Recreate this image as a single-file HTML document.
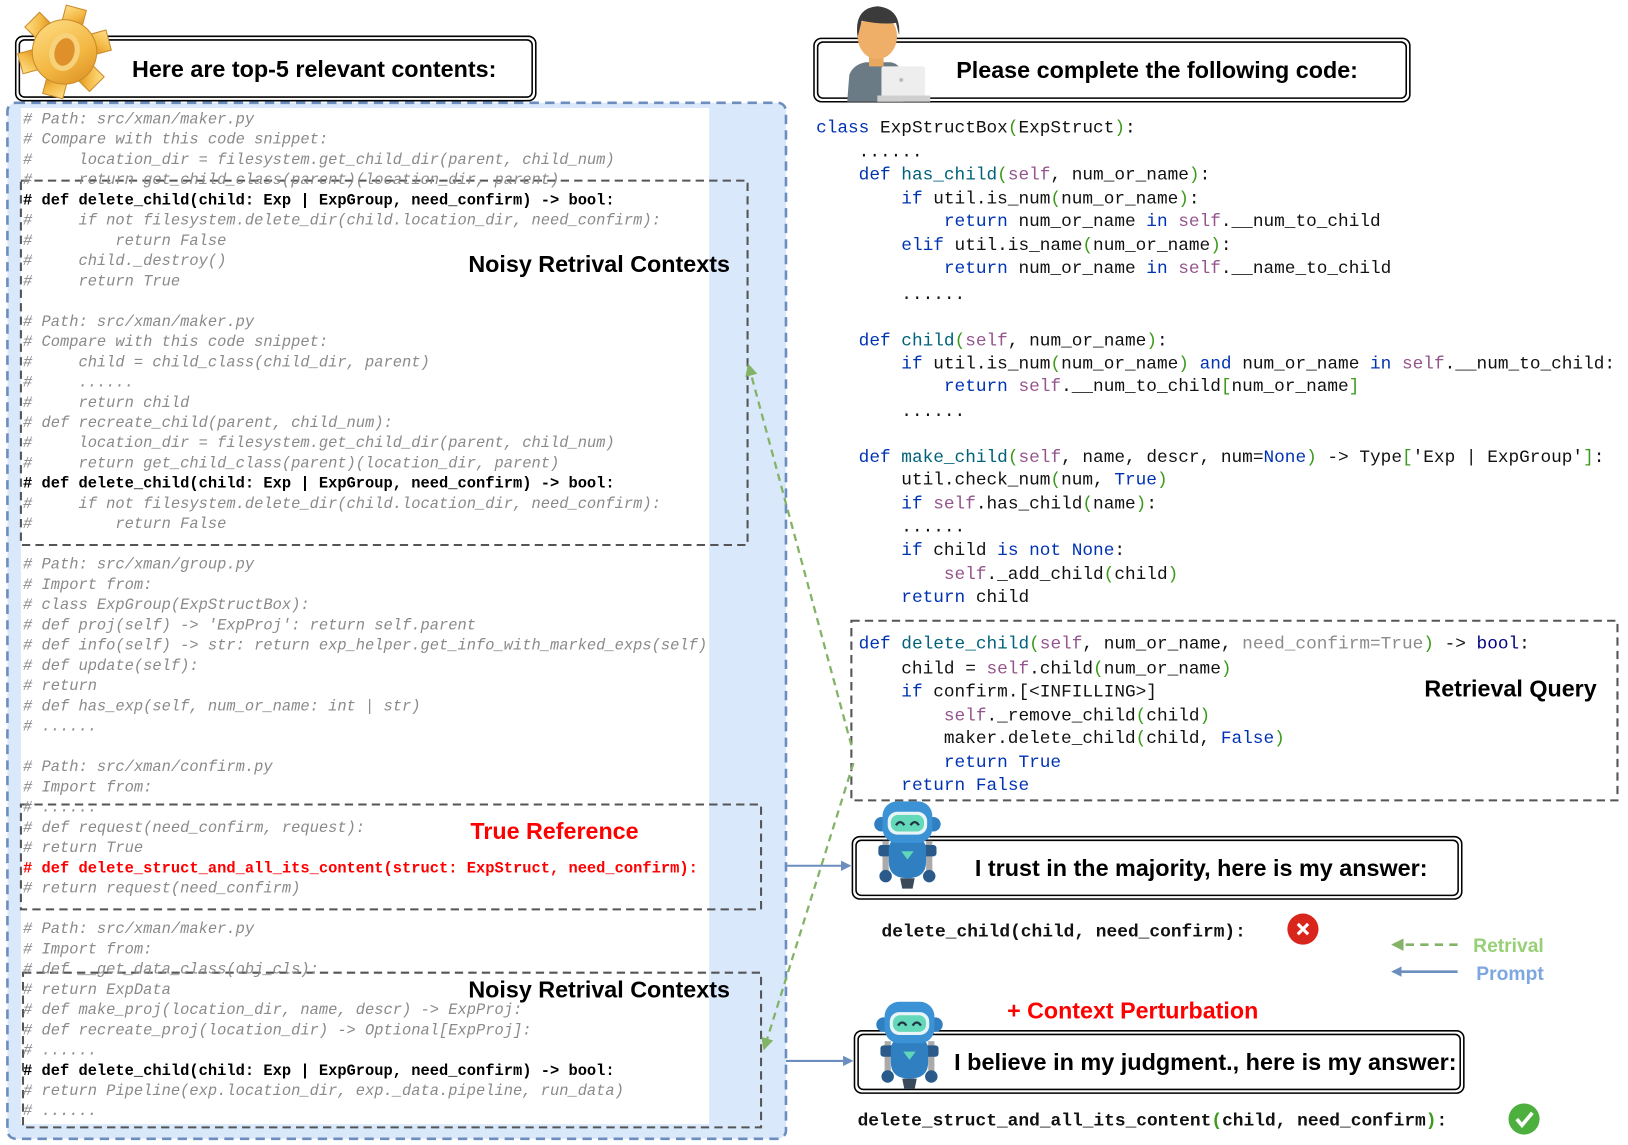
<!DOCTYPE html>
<html><head><meta charset="utf-8"><style>
html,body{margin:0;padding:0;background:#fff;width:1628px;height:1145px;overflow:hidden}
svg{display:block}
text{white-space:pre}
.c{font-family:"Liberation Mono",monospace;font-size:14.85px;font-style:italic;fill:#8a8a8a}
.b{font-family:"Liberation Mono",monospace;font-size:14.85px;font-weight:bold;fill:#000}
.r{font-family:"Liberation Mono",monospace;font-size:14.85px;font-weight:bold;fill:#f00}
.k{font-family:"Liberation Mono",monospace;font-size:17.1px;fill:#111}
.h{font-family:"Liberation Sans",Arial,sans-serif;font-weight:bold;font-size:22px}
.kw{fill:#0033b3}.fn{fill:#00627a}.sf{fill:#94558d}.p{fill:#3a9a1a}.g{fill:#8c8c8c}.bl{fill:#000080}
</style></head><body>
<svg width="1628" height="1145" viewBox="0 0 1568 1103" xmlns="http://www.w3.org/2000/svg">
<defs>
<marker id="ab" markerWidth="10" markerHeight="10" refX="8" refY="5" orient="auto" markerUnits="userSpaceOnUse"><path d="M0,0 L10,5 L0,10 z" fill="#6c8ebf"/></marker>
<marker id="ag" markerWidth="12" markerHeight="12" refX="10" refY="6" orient="auto" markerUnits="userSpaceOnUse"><path d="M0,0 L12,6 L0,12 z" fill="#82b366"/></marker>
<linearGradient id="gold" x1="0" y1="0" x2="1" y2="1"><stop offset="0" stop-color="#ffe08a"/><stop offset="0.6" stop-color="#f2b640"/><stop offset="1" stop-color="#d98a20"/></linearGradient>
</defs>

<rect x="7" y="99" width="750" height="998" rx="8" fill="#dae8fc" stroke="#6c8ebf" stroke-width="2.5" stroke-dasharray="9,6"/>
<rect x="20" y="104" width="663" height="979" fill="#fff"/>

<rect x="20" y="174" width="700" height="351" fill="none" stroke="#555" stroke-width="2" stroke-dasharray="8,5"/>
<rect x="20" y="775" width="713" height="101" fill="none" stroke="#555" stroke-width="2" stroke-dasharray="8,5"/>
<rect x="22" y="937" width="711" height="149" fill="none" stroke="#555" stroke-width="2" stroke-dasharray="8,5"/>

<g dominant-baseline="central">
<text class="c" x="22" y="115"># Path: src/xman/maker.py</text>
<text class="c" x="22" y="134.5"># Compare with this code snippet:</text>
<text class="c" x="22" y="154">#     location_dir = filesystem.get_child_dir(parent, child_num)</text>
<text class="c" x="22" y="173.5">#     return get_child_class(parent)(location_dir, parent)</text>
<text class="b" x="22" y="193"># def delete_child(child: Exp | ExpGroup, need_confirm) -&gt; bool:</text>
<text class="c" x="22" y="212.5">#     if not filesystem.delete_dir(child.location_dir, need_confirm):</text>
<text class="c" x="22" y="232">#         return False</text>
<text class="c" x="22" y="251.5">#     child._destroy()</text>
<text class="c" x="22" y="271">#     return True</text>
<text class="c" x="22" y="310"># Path: src/xman/maker.py</text>
<text class="c" x="22" y="329.5"># Compare with this code snippet:</text>
<text class="c" x="22" y="349">#     child = child_class(child_dir, parent)</text>
<text class="c" x="22" y="368.5">#     ......</text>
<text class="c" x="22" y="388">#     return child</text>
<text class="c" x="22" y="407.5"># def recreate_child(parent, child_num):</text>
<text class="c" x="22" y="427">#     location_dir = filesystem.get_child_dir(parent, child_num)</text>
<text class="c" x="22" y="446.5">#     return get_child_class(parent)(location_dir, parent)</text>
<text class="b" x="22" y="466"># def delete_child(child: Exp | ExpGroup, need_confirm) -&gt; bool:</text>
<text class="c" x="22" y="485.5">#     if not filesystem.delete_dir(child.location_dir, need_confirm):</text>
<text class="c" x="22" y="505">#         return False</text>
<text class="c" x="22" y="544"># Path: src/xman/group.py</text>
<text class="c" x="22" y="563.5"># Import from:</text>
<text class="c" x="22" y="583"># class ExpGroup(ExpStructBox):</text>
<text class="c" x="22" y="602.5"># def proj(self) -&gt; 'ExpProj': return self.parent</text>
<text class="c" x="22" y="622"># def info(self) -&gt; str: return exp_helper.get_info_with_marked_exps(self)</text>
<text class="c" x="22" y="641.5"># def update(self):</text>
<text class="c" x="22" y="661"># return</text>
<text class="c" x="22" y="680.5"># def has_exp(self, num_or_name: int | str)</text>
<text class="c" x="22" y="700"># ......</text>
<text class="c" x="22" y="739"># Path: src/xman/confirm.py</text>
<text class="c" x="22" y="758.5"># Import from:</text>
<text class="c" x="22" y="778"># ......</text>
<text class="c" x="22" y="797.5"># def request(need_confirm, request):</text>
<text class="c" x="22" y="817"># return True</text>
<text class="r" x="22" y="836.5"># def delete_struct_and_all_its_content(struct: ExpStruct, need_confirm):</text>
<text class="c" x="22" y="856"># return request(need_confirm)</text>
<text class="c" x="22" y="895"># Path: src/xman/maker.py</text>
<text class="c" x="22" y="914.5"># Import from:</text>
<text class="c" x="22" y="934"># def __get_data_class(obj_cls):</text>
<text class="c" x="22" y="953.5"># return ExpData</text>
<text class="c" x="22" y="973"># def make_proj(location_dir, name, descr) -&gt; ExpProj:</text>
<text class="c" x="22" y="992.5"># def recreate_proj(location_dir) -&gt; Optional[ExpProj]:</text>
<text class="c" x="22" y="1012"># ......</text>
<text class="b" x="22" y="1031.5"># def delete_child(child: Exp | ExpGroup, need_confirm) -&gt; bool:</text>
<text class="c" x="22" y="1051"># return Pipeline(exp.location_dir, exp._data.pipeline, run_data)</text>
<text class="c" x="22" y="1070.5"># ......</text>
</g>

<text class="h" x="451" y="262" textLength="252" lengthAdjust="spacingAndGlyphs">Noisy Retrival Contexts</text>
<text class="h" x="453" y="808" fill="#f00" textLength="162" lengthAdjust="spacingAndGlyphs">True Reference</text>
<text class="h" x="451" y="961" textLength="252" lengthAdjust="spacingAndGlyphs">Noisy Retrival Contexts</text>

<rect x="15" y="35" width="501" height="62" rx="7" fill="#fff" stroke="#000" stroke-width="1.5"/>
<rect x="18.5" y="38.5" width="494" height="55" rx="5" fill="none" stroke="#000" stroke-width="1.5"/>
<text class="h" x="127" y="74" textLength="351" lengthAdjust="spacingAndGlyphs">Here are top-5 relevant contents:</text>
<rect x="784" y="37" width="574" height="61" rx="7" fill="#fff" stroke="#000" stroke-width="1.5"/>
<rect x="787.5" y="40.5" width="567" height="54" rx="5" fill="none" stroke="#000" stroke-width="1.5"/>
<text class="h" x="921" y="75" textLength="387" lengthAdjust="spacingAndGlyphs">Please complete the following code:</text>

<g transform="translate(62,50) rotate(15)">
<g fill="url(#gold)" stroke="#c98a2a" stroke-width="1">
<rect x="-10" y="-44" width="20" height="18"/>
<rect x="-10" y="-44" width="20" height="18" transform="rotate(60)"/>
<rect x="-10" y="-44" width="20" height="18" transform="rotate(120)"/>
<rect x="-10" y="-44" width="20" height="18" transform="rotate(180)"/>
<rect x="-10" y="-44" width="20" height="18" transform="rotate(240)"/>
<rect x="-10" y="-44" width="20" height="18" transform="rotate(300)"/>
<circle r="31"/>
</g>
<ellipse rx="12" ry="16" fill="#e0902a" stroke="#f7d27a" stroke-width="5"/>
</g>

<g>
<path d="M816,98 L818,72 Q822,62 834,60 L858,60 Q868,62 868,72 L870,98 Z" fill="#6b7b86"/>
<rect x="837" y="52" width="14" height="12" fill="#e8a860"/>
<ellipse cx="845" cy="35" rx="19" ry="22" fill="#efaf68"/>
<path d="M826,36 Q822,8 845,6 Q868,8 866,34 L863,22 Q850,24 830,20 Z" fill="#3b3b3b"/>
<rect x="849" y="64" width="42" height="30" rx="2" fill="#eeeeee"/>
<rect x="845" y="92" width="51" height="6" fill="#cfcfcf"/>
<circle cx="868" cy="77" r="2" fill="#bbb"/>
</g>

<g class="k" dominant-baseline="central">
<text x="786" y="124"><tspan class="kw">class</tspan> ExpStructBox<tspan class="p">(</tspan>ExpStruct<tspan class="p">)</tspan>:</text>
<text x="786" y="147">    ......</text>
<text x="786" y="169">    <tspan class="kw">def</tspan> <tspan class="fn">has_child</tspan><tspan class="p">(</tspan><tspan class="sf">self</tspan>, num_or_name<tspan class="p">)</tspan>:</text>
<text x="786" y="192">        <tspan class="kw">if</tspan> util.is_num<tspan class="p">(</tspan>num_or_name<tspan class="p">)</tspan>:</text>
<text x="786" y="214">            <tspan class="kw">return</tspan> num_or_name <tspan class="kw">in</tspan> <tspan class="sf">self</tspan>.__num_to_child</text>
<text x="786" y="237">        <tspan class="kw">elif</tspan> util.is_name<tspan class="p">(</tspan>num_or_name<tspan class="p">)</tspan>:</text>
<text x="786" y="259">            <tspan class="kw">return</tspan> num_or_name <tspan class="kw">in</tspan> <tspan class="sf">self</tspan>.__name_to_child</text>
<text x="786" y="284">        ......</text>
<text x="786" y="329">    <tspan class="kw">def</tspan> <tspan class="fn">child</tspan><tspan class="p">(</tspan><tspan class="sf">self</tspan>, num_or_name<tspan class="p">)</tspan>:</text>
<text x="786" y="351">        <tspan class="kw">if</tspan> util.is_num<tspan class="p">(</tspan>num_or_name<tspan class="p">)</tspan> <tspan class="kw">and</tspan> num_or_name <tspan class="kw">in</tspan> <tspan class="sf">self</tspan>.__num_to_child:</text>
<text x="786" y="373">            <tspan class="kw">return</tspan> <tspan class="sf">self</tspan>.__num_to_child<tspan class="p">[</tspan>num_or_name<tspan class="p">]</tspan></text>
<text x="786" y="397">        ......</text>
<text x="786" y="441">    <tspan class="kw">def</tspan> <tspan class="fn">make_child</tspan><tspan class="p">(</tspan><tspan class="sf">self</tspan>, name, descr, num=<tspan class="kw">None</tspan><tspan class="p">)</tspan> -&gt; Type<tspan class="p">[</tspan>'Exp | ExpGroup'<tspan class="p">]</tspan>:</text>
<text x="786" y="463">        util.check_num<tspan class="p">(</tspan>num, <tspan class="kw">True</tspan><tspan class="p">)</tspan></text>
<text x="786" y="486">        <tspan class="kw">if</tspan> <tspan class="sf">self</tspan>.has_child<tspan class="p">(</tspan>name<tspan class="p">)</tspan>:</text>
<text x="786" y="508">        ......</text>
<text x="786" y="531">        <tspan class="kw">if</tspan> child <tspan class="kw">is not</tspan> <tspan class="kw">None</tspan>:</text>
<text x="786" y="554">            <tspan class="sf">self</tspan>._add_child<tspan class="p">(</tspan>child<tspan class="p">)</tspan></text>
<text x="786" y="576">        <tspan class="kw">return</tspan> child</text>
<text x="786" y="621">    <tspan class="kw">def</tspan> <tspan class="fn">delete_child</tspan><tspan class="p">(</tspan><tspan class="sf">self</tspan>, num_or_name, <tspan class="g">need_confirm=True</tspan><tspan class="p">)</tspan> -&gt; <tspan class="bl">bool</tspan>:</text>
<text x="786" y="645">        child = <tspan class="sf">self</tspan>.child<tspan class="p">(</tspan>num_or_name<tspan class="p">)</tspan></text>
<text x="786" y="667">        <tspan class="kw">if</tspan> confirm.[&lt;INFILLING&gt;]</text>
<text x="786" y="690">            <tspan class="sf">self</tspan>._remove_child<tspan class="p">(</tspan>child<tspan class="p">)</tspan></text>
<text x="786" y="712">            maker.delete_child<tspan class="p">(</tspan>child, <tspan class="kw">False</tspan><tspan class="p">)</tspan></text>
<text x="786" y="735">            <tspan class="kw">return</tspan> <tspan class="kw">True</tspan></text>
<text x="786" y="757">        <tspan class="kw">return</tspan> <tspan class="kw">False</tspan></text>
</g>

<rect x="820" y="598" width="738" height="173" fill="none" stroke="#555" stroke-width="2" stroke-dasharray="8,5"/>
<text class="h" x="1372" y="671" textLength="166" lengthAdjust="spacingAndGlyphs">Retrieval Query</text>

<line x1="820" y1="718" x2="721" y2="352" stroke="#82b366" stroke-width="2.2" stroke-dasharray="7,5" marker-end="url(#ag)"/>
<line x1="822" y1="735" x2="736" y2="1010" stroke="#82b366" stroke-width="2.2" stroke-dasharray="7,5" marker-end="url(#ag)"/>

<line x1="757" y1="834" x2="818" y2="834" stroke="#6c8ebf" stroke-width="2" marker-end="url(#ab)"/>
<line x1="757" y1="1022" x2="820" y2="1022" stroke="#6c8ebf" stroke-width="2" marker-end="url(#ab)"/>

<rect x="821" y="806" width="587" height="60" rx="7" fill="#fff" stroke="#000" stroke-width="1.5"/>
<rect x="824.5" y="809.5" width="580" height="53" rx="5" fill="none" stroke="#000" stroke-width="1.5"/>
<text class="h" x="939" y="844" textLength="436" lengthAdjust="spacingAndGlyphs">I trust in the majority, here is my answer:</text>
<rect x="823" y="993" width="587" height="60" rx="7" fill="#fff" stroke="#000" stroke-width="1.5"/>
<rect x="826.5" y="996.5" width="580" height="53" rx="5" fill="none" stroke="#000" stroke-width="1.5"/>
<text class="h" x="919" y="1031" textLength="484" lengthAdjust="spacingAndGlyphs">I believe in my judgment., here is my answer:</text>

<g id="robot" transform="translate(834,772)">
<rect x="16" y="38" width="6" height="34" fill="#aaa"/><rect x="58" y="38" width="6" height="34" fill="#aaa"/>
<circle cx="19" cy="72" r="6" fill="#2a5a8a"/><circle cx="61" cy="72" r="6" fill="#2a5a8a"/>
<rect x="12" y="42" width="14" height="11" rx="3" fill="#2a5a8a"/><rect x="54" y="42" width="14" height="11" rx="3" fill="#2a5a8a"/>
<path d="M22,46 Q22,34 40,34 Q58,34 58,46 L58,58 Q58,74 40,74 Q22,74 22,58 Z" fill="#2f7fc1"/>
<path d="M33,74 L47,74 L45,84 L35,84 Z" fill="#3a4a5a"/>
<path d="M34,48 L46,48 L40,56 Z" fill="#5fd6b8"/>
<circle cx="15" cy="22" r="7" fill="#2f7fc1"/><circle cx="65" cy="22" r="7" fill="#2f7fc1"/>
<rect x="16" y="0" width="48" height="40" rx="14" fill="#3b93d6"/>
<rect x="21" y="10" width="38" height="22" rx="9" fill="#e8f4f8"/>
<rect x="24" y="13" width="32" height="16" rx="7" fill="#63d9b9"/>
<path d="M29,23 Q33,17 37,23 M43,23 Q47,17 51,23" stroke="#234" stroke-width="2.2" fill="none"/>
</g>
<use href="#robot" transform="translate(2,193)"/>

<text class="k" x="849" y="902" style="font-weight:bold;font-size:17px" textLength="351" lengthAdjust="spacingAndGlyphs">delete_child(child, need_confirm):</text>
<circle cx="1255" cy="895" r="15" fill="#d9261c"/>
<path d="M1250,890 L1260,900 M1260,890 L1250,900" stroke="#fff" stroke-width="3"/>
<text class="k" x="826" y="1084" style="font-weight:bold;font-size:17px" textLength="568" lengthAdjust="spacingAndGlyphs">delete_struct_and_all_its_content<tspan class="p">(</tspan>child, need_confirm<tspan class="p">)</tspan>:</text>
<circle cx="1468" cy="1078" r="15" fill="#4caf3e"/>
<path d="M1461,1078 L1466,1084 L1476,1072" stroke="#fff" stroke-width="3.5" fill="none"/>

<text class="h" x="970" y="981" fill="#f00" textLength="242" lengthAdjust="spacingAndGlyphs">+ Context Perturbation</text>

<line x1="1404" y1="910" x2="1342" y2="910" stroke="#82b366" stroke-width="2.5" stroke-dasharray="8,6" marker-end="url(#ag)"/>
<text class="h" x="1419" y="917" fill="#97d077" style="font-size:19px" textLength="68" lengthAdjust="spacingAndGlyphs">Retrival</text>
<line x1="1404" y1="936" x2="1342" y2="936" stroke="#6c8ebf" stroke-width="2.5" marker-end="url(#ab)"/>
<text class="h" x="1422" y="944" fill="#7ea6e0" style="font-size:19px" textLength="65" lengthAdjust="spacingAndGlyphs">Prompt</text>
</svg>
</body></html>
